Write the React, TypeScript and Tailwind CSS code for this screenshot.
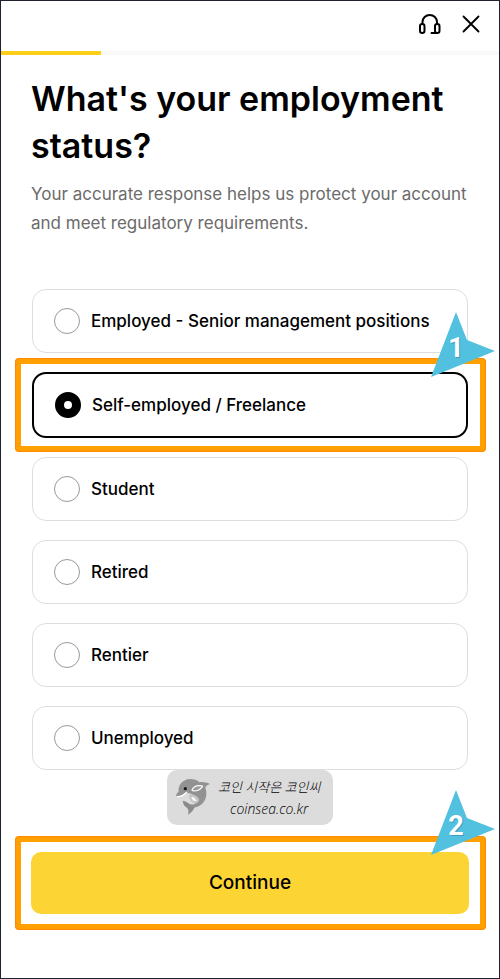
import { useState } from "react"

const statuses = [
  { id: "employed", label: "Employed - Senior management positions" },
  { id: "self-employed", label: "Self-employed / Freelance" },
  { id: "student", label: "Student" },
  { id: "retired", label: "Retired" },
  { id: "rentier", label: "Rentier" },
  { id: "unemployed", label: "Unemployed" },
]

function HeadsetIcon() {
  return (
    <svg width="24" height="24" viewBox="0 0 24 24" fill="none" stroke="black" strokeWidth="2" strokeLinecap="round" strokeLinejoin="round">
      <path d="M4.500 11.500V10a7.250 7 0 0 1 14.500 0v1.500" />
      <rect x="2" y="12" width="4.500" height="9" rx="2.200" />
      <rect x="17" y="12" width="4.500" height="9" rx="2.200" />
      <path d="M18.500 21h-5" />
    </svg>
  )
}

function CloseIcon() {
  return (
    <svg width="18" height="18" viewBox="0 0 18 18" fill="none" stroke="black" strokeWidth="1.9" strokeLinecap="round">
      <path d="M1.500 1.500l15 15M16.500 1.500l-15 15" />
    </svg>
  )
}

function DolphinIcon() {
  return (
    <svg width="36" height="40" viewBox="12 9 108 120">
      {/* tail */}
      <path d="M32 77C40 78 48 83 54 88L72 90C66 102 60 112 48 120C51 112 50 106 46 99C38 95 33 87 32 77Z" fill="#8a8a8a" />
      {/* back and dorsal fin */}
      <path d="M12 64C12 58 16 53 20 50C17 32 32 12 54 12C66 12 76 15 82 22C92 20 102 22 114 27C106 30 102 33 100 38C109 62 98 88 76 95C68 98 60 98 52 93C66 90 74 84 76 76C70 64 60 55 48 54C36 54 26 66 12 64Z" fill="#929292" />
      {/* belly */}
      <path d="M52 60C62 56 74 60 82 74C80 82 74 86 68 85C58 82 50 72 52 60Z" fill="#c4c4c4" />
      <path d="M58 66C65 65 71 70 74 78C66 81 59 75 58 66Z" fill="#f5f5f5" />
      <path d="M16 65C27 66 36 60 44 52" stroke="#fff" strokeWidth="4" strokeLinecap="round" fill="none" />
      {/* flipper */}
      <path d="M60 45C64 35 76 30 92 33C88 41 77 48 64 48Z" fill="#9c9c9c" stroke="#fff" strokeWidth="3.500" strokeLinejoin="round" />
      <circle cx="40" cy="41" r="5" fill="#1a1a1a" />
    </svg>
  )
}

function StepPointer({ step }: { step: number }) {
  return (
    <svg width="64" height="65" viewBox="0 0 64 65" className="block">
      <path d="M25 0L36 28L64 39L0 65Z" fill="#52c1e0" />
      <text x="26" y="46" textAnchor="middle" fontFamily="Roboto, sans-serif" fontWeight="700" fontSize="27" fill="#3a8da6" opacity="0.7">{step}</text>
      <text x="25" y="45" textAnchor="middle" fontFamily="Roboto, sans-serif" fontWeight="700" fontSize="27" fill="white">{step}</text>
    </svg>
  )
}

// Orange frame and numbered pointer laid over the element to act on
function Callout({ step }: { step: number }) {
  return (
    <div className="pointer-events-none absolute -right-[17px] -left-4 top-1/2 h-[94px] -translate-y-1/2 rounded border-6 border-[#ffa000] outline-1 -outline-offset-1 outline-[#ff8a00]">
      <div className="absolute -right-[15px] -top-[52px]">
        <StepPointer step={step} />
      </div>
    </div>
  )
}

export default function App() {
  const [selected, setSelected] = useState("self-employed")

  return (
    <div className="min-h-screen bg-white border border-[#1e2230] font-['Inter','Noto_Sans_CJK_KR',sans-serif] text-black">
      <header className="flex h-[50px] items-center justify-end gap-5 pr-[19px] pb-1">
        <button aria-label="Support">
          <HeadsetIcon />
        </button>
        <button aria-label="Close">
          <CloseIcon />
        </button>
      </header>
      <div className="h-1 bg-[#f9f9f9]">
        <div className="h-full w-1/5 bg-[#fdd017]" />
      </div>

      <main className="px-[30px] pt-5">
        <h1 className="text-[34px] leading-[47px] font-semibold">What's your employment status?</h1>
        <p className="mt-[11px] text-[17px] leading-[29px] text-[#6b6b6b]">
          Your accurate response helps us protect your account and meet regulatory requirements.
        </p>

        <div role="radiogroup" aria-label="Employment status" className="mt-[51px] flex flex-col gap-[19px]">
          {statuses.map((s) => (
            <div key={s.id} className="relative px-px">
              <label
                className={`flex items-center gap-[11px] rounded-[14px] px-[21px] py-[18px] text-[17px] leading-[26px] font-medium ${
                  selected === s.id ? "border-2 border-black" : "border border-[#dedede]"
                }`}
              >
                <input
                  type="radio"
                  name="status"
                  checked={selected === s.id}
                  onChange={() => setSelected(s.id)}
                  className="size-[26px] shrink-0 appearance-none rounded-full border border-[#999] checked:border-9 checked:border-black"
                />
                {s.label}
              </label>
              {s.id === "self-employed" && <Callout step={1} />}
            </div>
          ))}
        </div>

        <div className="mx-auto flex h-[55px] w-[166px] items-center gap-1.5 rounded-[10px] bg-[#dcdcdc] pl-[9px]">
          <DolphinIcon />
          <div className="text-center font-light italic font-['Open_Sans','Noto_Sans_CJK_KR',sans-serif]">
            <p className="text-[13px] leading-[21px]">코인 시작은 코인씨</p>
            <p className="text-sm leading-[21px]">coinsea.co.kr</p>
          </div>
        </div>

        <div className="relative mt-[27px] mb-15">
          <button className="h-[62px] w-full rounded-[10px] bg-[#fcd535] text-[19px] font-medium">Continue</button>
          <Callout step={2} />
        </div>
      </main>
    </div>
  )
}
